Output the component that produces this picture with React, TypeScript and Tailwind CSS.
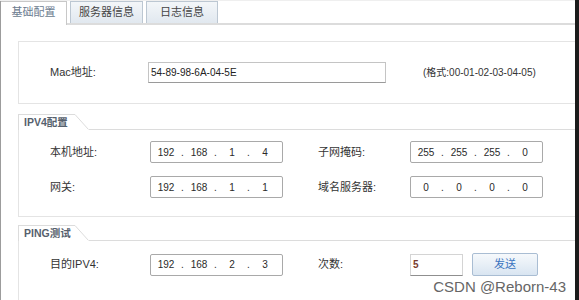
import React from "react";

const IpInput = ({ parts }: { parts: string[] }) => (
  <div className="flex h-[22px] w-[133px] items-center rounded-[2px] border border-[#a9a9a9] bg-white pl-[3px] text-[10px] text-[#2a2a2a] font-['Liberation_Sans',sans-serif]">
    {parts.map((p, i) => (
      <React.Fragment key={i}>
        <span className="w-[24px] text-center">{p}</span>
        {i < 3 && <span className="w-[9px] text-center">.</span>}
      </React.Fragment>
    ))}
  </div>
);

const SectionHeader = ({ title }: { title: string }) => (
  <div className="flex h-[16px] items-stretch">
    <div className="flex w-[57px] items-center border-l border-t border-[#dcdcdc] pl-[5px] text-[10.5px] font-semibold text-[#56616d]">
      {title}
    </div>
    <svg width="14" height="16" viewBox="0 0 14 16" className="block">
      <line x1="0" y1="0.5" x2="13.5" y2="15.5" stroke="#dcdcdc" strokeWidth="1" />
    </svg>
    <div className="flex-1 border-b border-[#dcdcdc]" />
  </div>
);

export default function App() {
  return (
    <div className="relative flex h-[300px] w-[579px] overflow-hidden bg-white font-['Liberation_Sans','Noto_Sans_CJK_SC',sans-serif] text-[#333]">
      <div className="flex w-[575px] flex-col">
        <div className="h-[10px] border-t border-[#efefef]" />
        <div className="flex flex-1 flex-col border-l border-[#9c9c9c]">
          {/* tabs */}
          <div className="flex h-[24px] items-start">
            <div className="flex h-[24px] w-[66px] items-center justify-center border-r border-t border-[#c8c8c8] bg-white pb-[2px] text-[11px] text-[#6b7b8e]">
              基础配置
            </div>
            <div className="h-[24px] w-[3px] border-b-2 border-[#dcdcdc]" />
            <div className="h-[24px] w-[73px] border-b-2 border-[#dcdcdc]">
              <div className="flex h-[22px] items-center justify-center border-l border-r border-t border-[#bcc7d2] bg-gradient-to-b from-[#f3f6f9] to-[#e1e8ef] text-[11px] text-[#444]">
                服务器信息
              </div>
            </div>
            <div className="h-[24px] w-[3px] border-b-2 border-[#dcdcdc]" />
            <div className="h-[24px] w-[72px] border-b-2 border-[#dcdcdc]">
              <div className="flex h-[22px] items-center justify-center border-l border-r border-t border-[#bcc7d2] bg-gradient-to-b from-[#f3f6f9] to-[#e1e8ef] text-[11px] text-[#444]">
                日志信息
              </div>
            </div>
            <div className="h-[24px] flex-1 border-b-2 border-[#dcdcdc]" />
          </div>

          {/* body */}
          <div className="flex flex-col pl-[17px] pt-[16px]">
            {/* mac */}
            <div className="flex h-[63px] items-center border-b border-l border-t border-[#e4e4e4] pl-[31px]">
              <span className="w-[98px] text-[11px]">Mac地址:</span>
              <div className="flex h-[21px] w-[238px] items-center border border-[#c4c4c4] border-b-[#9a9a9a] pl-[2px] text-[10px] text-[#222]">
                54-89-98-6A-04-5E
              </div>
              <span className="ml-[37px] text-[10px] text-[#333]">(格式:00-01-02-03-04-05)</span>
            </div>

            {/* ipv4 */}
            <div className="mt-[10px]">
              <SectionHeader title="IPV4配置" />
              <div className="flex h-[87px] flex-col gap-[13px] border-b border-l border-[#e4e4e4] pl-[31px] pt-[11px]">
                <div className="flex items-center">
                  <span className="w-[100px] text-[11px]">本机地址:</span>
                  <IpInput parts={["192", "168", "1", "4"]} />
                  <span className="ml-[35px] w-[92px] text-[11px]">子网掩码:</span>
                  <IpInput parts={["255", "255", "255", "0"]} />
                </div>
                <div className="flex items-center">
                  <span className="w-[100px] text-[11px]">网关:</span>
                  <IpInput parts={["192", "168", "1", "1"]} />
                  <span className="ml-[35px] w-[92px] text-[11px]">域名服务器:</span>
                  <IpInput parts={["0", "0", "0", "0"]} />
                </div>
              </div>
            </div>

            {/* ping */}
            <div className="mt-[8px]">
              <SectionHeader title="PING测试" />
              <div className="flex h-[60px] flex-col border-l border-[#e4e4e4] pl-[31px] pt-[12px]">
                <div className="flex items-center">
                  <span className="w-[100px] text-[11px]">目的IPV4:</span>
                  <IpInput parts={["192", "168", "2", "3"]} />
                  <span className="ml-[35px] w-[92px] text-[11px]">次数:</span>
                  <div className="flex h-[22px] w-[53px] items-center border border-[#d4d4d4] border-b-[#8f8f8f] pl-[2px] text-[10px] font-semibold text-[#7a3b2e]">
                    5
                  </div>
                  <button className="ml-[9px] flex h-[23px] w-[66px] items-center justify-center rounded-[2px] border border-[#a9bdd3] bg-gradient-to-b from-[#f6f9fc] to-[#d9e5f1] text-[11px] text-[#3b74c0]">
                    发送
                  </button>
                </div>
              </div>
            </div>
          </div>
        </div>
      </div>
      <div className="h-full w-[4px] bg-[#1b1b1b]" />
      <div className="absolute bottom-[6px] right-[13px] text-[15px] leading-none text-[#666] font-['Liberation_Sans',sans-serif]">
        CSDN @Reborn-43
      </div>
    </div>
  );
}
